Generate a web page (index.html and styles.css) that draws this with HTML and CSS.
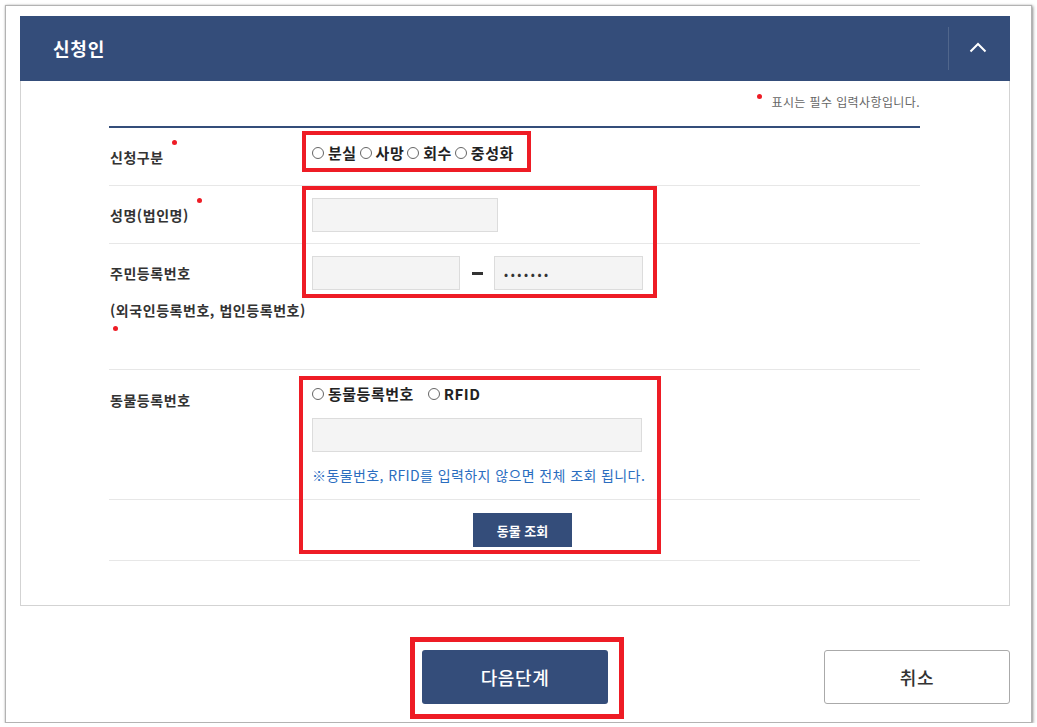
FILE: index.html
```html
<!DOCTYPE html>
<html lang="ko">
<head>
<meta charset="utf-8">
<title>신청인</title>
<link rel="stylesheet" href="styles.css">
</head>
<body>
<div class="window">
  <div class="header">
    <h2 class="title">신청인</h2>
    <span class="divider"></span>
    <span class="toggle">
      <svg width="18" height="11" viewBox="0 0 18 11"><polyline points="1.5,9.5 9,2 16.5,9.5" fill="none" stroke="#fff" stroke-width="2"/></svg>
    </span>
  </div>
  <div class="panel">
    <p class="note"><i class="req note-dot"></i>표시는 필수 입력사항입니다.</p>
    <div class="table">
      <div class="row r1">
        <div class="label">신청구분<i class="req"></i></div>
        <div class="cell radios top">
          <span class="opt"><span class="rd"></span>분실</span><span class="opt"><span class="rd"></span>사망</span><span class="opt"><span class="rd"></span>회수</span><span class="opt"><span class="rd"></span>중성화</span>
        </div>
      </div>
      <div class="row r2">
        <div class="label">성명(법인명)<i class="req"></i></div>
        <div class="cell"><input class="field name" type="text"></div>
      </div>
      <div class="row r3">
        <div class="label tall">주민등록번호<br>(외국인등록번호, 법인등록번호)<br><i class="req req-line"></i></div>
        <div class="cell id-cell">
          <input class="field id1" type="text">
          <span class="dash"></span>
          <input class="field id2" type="text" value="•••••••">
        </div>
      </div>
      <div class="row r4">
        <div class="label animal">동물등록번호</div>
        <div class="cell animal-cell">
          <div class="radios small"><span class="opt wide"><span class="rd"></span>동물등록번호</span><span class="opt"><span class="rd"></span>RFID</span></div>
          <input class="field animal-no" type="text">
          <p class="hint">※동물번호, RFID를 입력하지 않으면 전체 조회 됩니다.</p>
        </div>
      </div>
      <div class="row r5">
        <div class="label"></div>
        <div class="cell"><button class="search" type="button">동물 조회</button></div>
      </div>
    </div>
  </div>
  <div class="actions">
    <span></span>
    <button class="next" type="button">다음단계</button>
    <button class="cancel" type="button">취소</button>
  </div>

  <span class="mark m1"></span>
  <span class="mark m2"></span>
  <span class="mark m3"></span>
  <span class="mark m4"></span>
</div>
</body>
</html>
```
FILE: styles.css
```css
* { box-sizing: border-box; }
html, body { margin: 0; padding: 0; background: #ffffff; }
body {
  font-family: "Noto Sans CJK KR", "Noto Sans", sans-serif;
  color: #333;
}
.window {
  position: relative;
  margin: 5px 0 0 5px;
  width: 1027px;
  height: 718px;
  border: 1px solid #b3b3b3;
  box-shadow: 1px 1px 3px rgba(0,0,0,0.45), 0 0 1px rgba(0,0,0,0.2);
  background: #fff;
}
.header {
  margin: 10px 21px 0 14px;
  height: 65px;
  background: #344d7a;
  display: flex;
  align-items: center;
}
.title {
  flex: 1;
  margin: 0;
  padding: 0 0 2px 33px;
  color: #fff;
  font-size: 18px;
  font-weight: 700;
  letter-spacing: 0.8px;
  line-height: 24px;
}
.divider {
  width: 1px;
  height: 43px;
  background: rgba(255,255,255,0.14);
}
.toggle {
  width: 58px;
  display: flex;
  justify-content: center;
  align-items: center;
  margin-right: 3px;
}
.toggle svg { display: block; margin-top: -2px; }
.panel {
  margin: 0 21px 0 14px;
  height: 525px;
  border: 1px solid #d3d3d3;
  border-top: none;
  padding: 0 89px 0 88px;
}
.note {
  margin: 0;
  padding-top: 11px;
  height: 45px;
  text-align: right;
  font-size: 12px;
  line-height: 20px;
  letter-spacing: 0.4px;
  color: #666;
}
.req {
  display: inline-block;
  width: 5px;
  height: 5px;
  border-radius: 50%;
  background: #ee1c25;
  position: relative;
  top: -18px;
  margin-left: 8px;
}
.note-dot { margin: 0 9px 0 0; top: -8px; }
.table { border-top: 2px solid #344d7a; }
.row {
  display: grid;
  grid-template-columns: 193px 1fr;
  border-bottom: 1px solid #e7e7e7;
}
.r1 { height: 58px; align-items: center; }
.r2 { height: 58px; align-items: center; }
.r3 { height: 126px; align-items: start; }
.r4 { height: 130px; align-items: start; }
.r5 { height: 61px; align-items: center; }
.label {
  padding-left: 1px;
  font-size: 14px;
  font-weight: 700;
  line-height: 20px;
  letter-spacing: 0.55px;
  color: #333;
  white-space: nowrap;
}
.r1 .label { padding-top: 1px; }
.label.tall { padding-top: 11px; line-height: 37px; }
.req-line { margin-left: 3px; top: -22px; }
.label.animal { padding-top: 20px; }
.cell { padding-left: 10px; }
.radios {
  font-size: 15px;
  font-weight: 700;
  letter-spacing: 0.5px;
  color: #222;
  line-height: 20px;
  white-space: nowrap;
}
.radios.top { padding-bottom: 8px; }
.opt { display: inline-flex; align-items: center; margin-right: 3px; }
.rd {
  display: inline-block;
  width: 12px;
  height: 12px;
  border: 1px solid #666;
  border-radius: 50%;
  margin-right: 4px;
}
.opt.wide { margin-right: 14px; }
.field {
  display: block;
  height: 34px;
  border: 1px solid #dcdcdc;
  background: #f4f4f4;
  margin: 0;
  padding: 0 9px;
  font-family: inherit;
  font-size: 12px;
  color: #333;
  letter-spacing: 2.6px;
  outline: none;
}
.name { width: 186px; }
.id-cell {
  display: flex;
  align-items: center;
  margin-top: 12px;
}
.id1 { width: 148px; }
.id2 { width: 149px; }
.dash {
  width: 34px;
  display: flex;
  justify-content: center;
}
.dash::before {
  content: "";
  width: 11px;
  height: 3px;
  background: #333;
}
.animal-cell { padding-top: 14px; }
.animal-no { width: 330px; margin-top: 14px; }
.hint {
  margin: 13px 0 0;
  font-size: 14px;
  line-height: 20px;
  letter-spacing: 0.4px;
  color: #2a6dbf;
  white-space: nowrap;
}
.search {
  margin-left: 161px;
  width: 99px;
  height: 34px;
  border: none;
  background: #344d7a;
  color: #fff;
  font-family: inherit;
  font-size: 13px;
  font-weight: 700;
  letter-spacing: 0;
  padding: 0;
}
.actions {
  margin: 44px 21px 0 14px;
  display: grid;
  grid-template-columns: 1fr 186px 1fr;
  align-items: center;
}
.actions button {
  height: 54px;
  width: 186px;
  border-radius: 3px;
  font-family: inherit;
  font-size: 18px;
  font-weight: 500;
  letter-spacing: 0.6px;
  padding: 0;
}
.next {
  border: none;
  background: #344d7a;
  color: #fff;
}
.cancel {
  justify-self: end;
  border: 1px solid #aaa;
  background: #fff;
  color: #333;
}
.mark {
  position: absolute;
  border: 4px solid #ee1c25;
  pointer-events: none;
}
.m1 { left: 296px; top: 125px; width: 229px; height: 41px; }
.m2 { left: 296px; top: 180px; width: 355px; height: 112px; }
.m3 { left: 293px; top: 370px; width: 362px; height: 178px; }
.m4 { left: 404px; top: 631px; width: 214px; height: 82px; border-width: 5px; }
```
